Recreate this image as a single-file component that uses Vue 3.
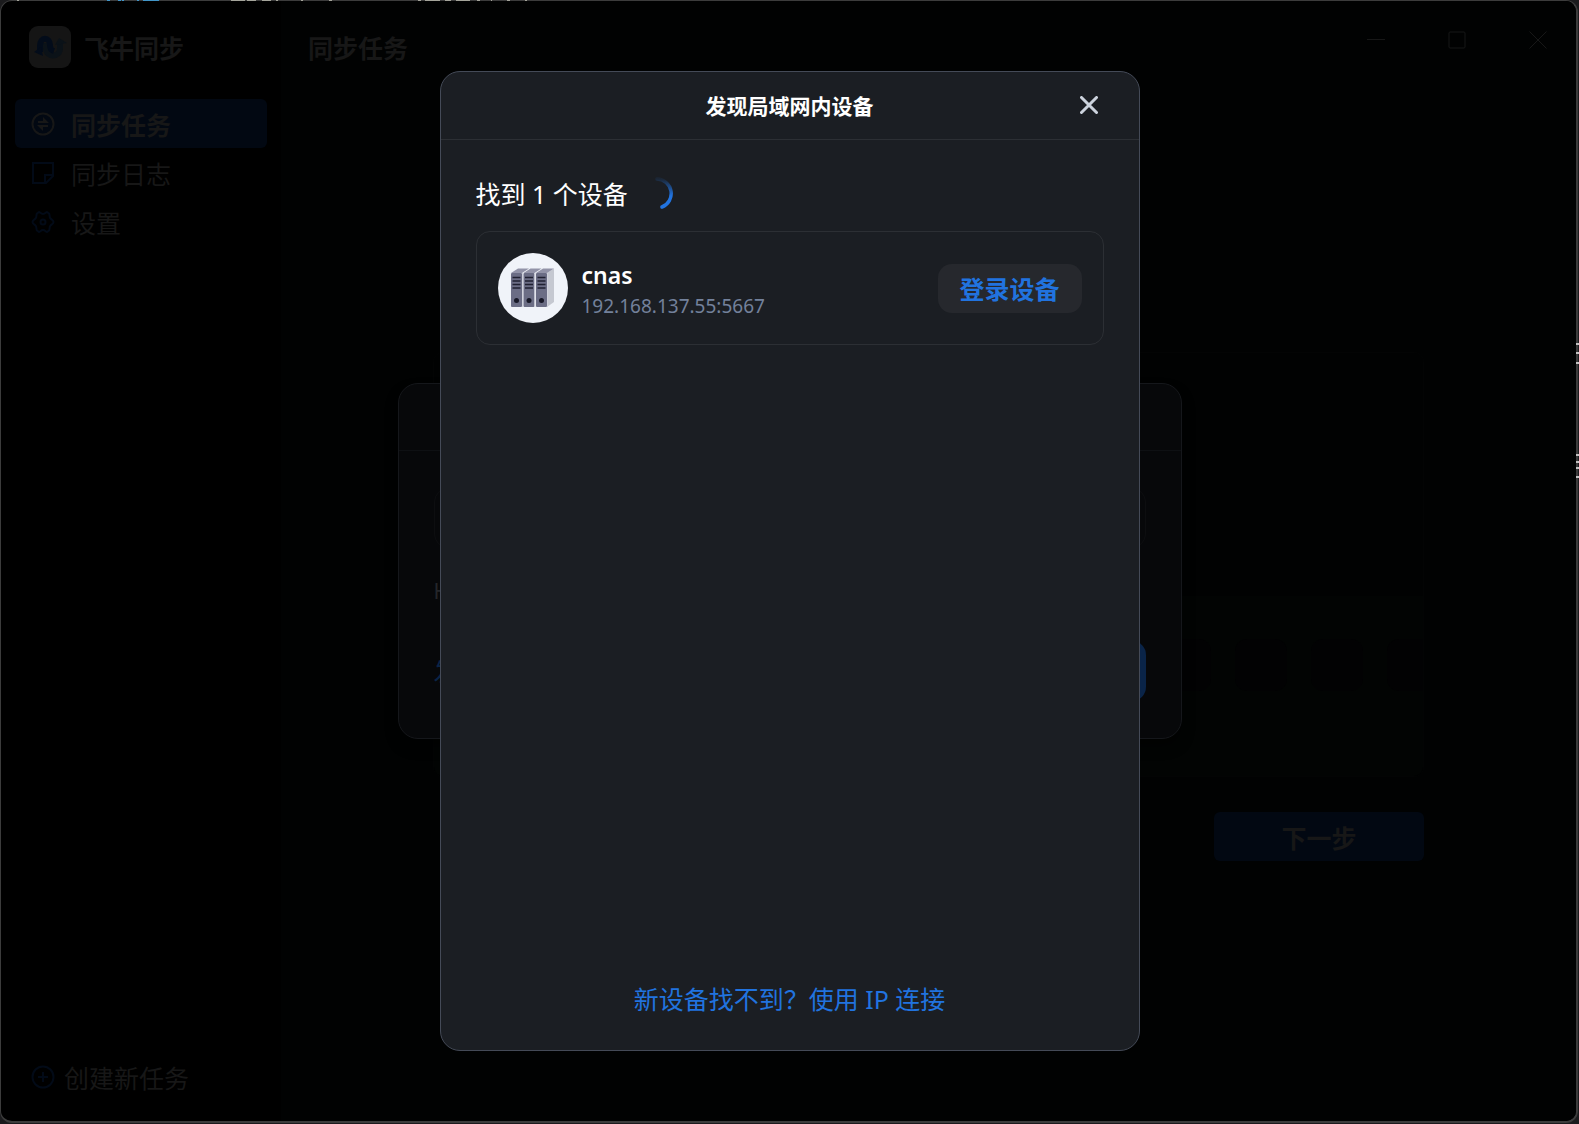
<template>
  <div class="desktop">
    <div class="window">
      <aside class="sidebar">
        <div class="brand">
          <svg class="logo" viewBox="0 0 42 42" aria-hidden="true">
            <rect width="42" height="42" rx="9" fill="#151515" />
            <path d="M17 17V22C17 32 31 32 31 22V17" fill="none" stroke="#0b1218" stroke-width="6" />
            <path d="M26 19L30 12L38 17Z" fill="#0b1218" />
            <path d="M11 26V20C11 10 21 11 21 19C21 23 22 24 25 25" fill="none" stroke="#030c1a" stroke-width="6" />
            <path d="M5 26L12 21L14 30Z" fill="#030c1a" />
          </svg>
          <span class="brand-name">飞牛同步</span>
        </div>

        <nav class="menu">
          <a
            v-for="item in menu"
            :key="item.id"
            href="#"
            class="menu-item"
            :class="{ active: item.id === current }"
            @click.prevent="current = item.id"
          >
            <svg class="menu-icon" viewBox="0 0 24 24" fill="none" stroke="currentColor" stroke-width="2">
              <template v-if="item.id === 'tasks'">
                <circle cx="12" cy="12" r="10.5" />
                <path d="M7 10H16M17 14H8" />
                <path d="M12 5L18 11H12ZM12 19L6 13H12Z" fill="currentColor" stroke="none" />
              </template>
              <template v-else-if="item.id === 'logs'">
                <path d="M2 2H22V15L15 22H2Z" />
                <path d="M14 22V14H22" />
              </template>
              <template v-else>
                <path d="M8 2C9 2 10 4 12 4S15 2 16 2L18 3.500C19 4.500 18 7 19.500 8.500C20.500 9.500 22.500 10 22.500 12S20.500 14.500 19.500 15.500C18 17 19 19.500 18 20.500L16 22C15 22 14 20 12 20S9 22 8 22L6 20.500C5 19.500 6 17 4.500 15.500C3.500 14.500 1.500 14 1.500 12S3.500 9.500 4.500 8.500C6 7 5 4.500 6 3.500Z" stroke-linejoin="round" />
                <circle cx="12" cy="12" r="2.5" />
              </template>
            </svg>
            <span>{{ item.label }}</span>
          </a>
        </nav>

        <button type="button" class="create-button">
          <svg class="menu-icon" viewBox="0 0 24 24" fill="none" stroke="currentColor" stroke-width="2">
            <circle cx="12" cy="12" r="10.5" />
            <path d="M12 7V17M7 12H17" />
          </svg>
          <span>创建新任务</span>
        </button>
      </aside>

      <main class="content">
        <header class="content-header">
          <h1>同步任务</h1>
          <div class="window-controls">
            <button type="button" aria-label="最小化">
              <svg viewBox="0 0 18 18"><path d="M0 8.500H18" /></svg>
            </button>
            <button type="button" aria-label="最大化">
              <svg viewBox="0 0 18 18"><rect x="1" y="1" width="16" height="16" rx="1" /></svg>
            </button>
            <button type="button" aria-label="关闭">
              <svg viewBox="0 0 18 18"><path d="M0.500 0.500L17.500 17.500M17.500 0.500L0.500 17.500" /></svg>
            </button>
          </div>
        </header>
        <div class="wizard">
          <div class="preview">
            <div class="preview-dock">
              <i v-for="n in 13" :key="n"></i>
            </div>
          </div>
          <button type="button" class="next-button">下一步</button>
        </div>
      </main>
    </div>

    <!-- bits of the windows behind that show along the edges -->
    <div class="edge-top" aria-hidden="true">
      <i
        v-for="[x, width, color] in topMarks"
        :key="x"
        :style="{ left: x + 'px', width: width + 'px', background: color }"
      ></i>
    </div>
    <div class="edge-right" aria-hidden="true">
      <i v-for="y in rightMarks" :key="y" :style="{ top: y + 'px' }"></i>
    </div>

    <div class="overlay">
      <section class="login-dialog" aria-hidden="true">
        <div class="login-header">
          <svg class="login-close" viewBox="0 0 18 18"><path d="M1 1L17 17M17 1L1 17" /></svg>
        </div>
        <div class="login-body">
          <div class="login-field"></div>
          <div class="login-protocol">HTTPS</div>
          <div class="login-footer">
            <span>发现</span>
            <div class="login-submit"></div>
          </div>
        </div>
      </section>
    </div>

    <div class="overlay">
      <section class="discover-dialog" role="dialog" aria-labelledby="discover-title">
        <header class="discover-header">
          <h2 id="discover-title">发现局域网内设备</h2>
          <button type="button" class="close-button" aria-label="关闭">
            <svg viewBox="0 0 18 18"><path d="M1.500 1.500L16.500 16.500M16.500 1.500L1.500 16.500" /></svg>
          </button>
        </header>

        <div class="discover-body">
          <div class="found">
            <span>找到 {{ devices.length }} 个设备</span>
            <svg class="spinner" viewBox="0 0 32 32" aria-hidden="true">
              <defs>
                <linearGradient id="spin" x1="0" y1="0" x2="0" y2="1">
                  <stop offset="0" stop-color="#2173df" stop-opacity="0.1" />
                  <stop offset="0.6" stop-color="#2173df" />
                </linearGradient>
              </defs>
              <path d="M15 2A14.500 14.500 0 0 1 20 30" fill="none" stroke="url(#spin)" stroke-width="3.5" stroke-linecap="round" />
            </svg>
          </div>

          <div v-for="device in devices" :key="device.address" class="device">
            <svg class="device-avatar" viewBox="0 0 70 70" aria-hidden="true">
              <circle cx="35" cy="35" r="35" fill="#f0f3f9" />
              <path d="M49 20L56 15.500V49L49 54Z" fill="#c5c8d1" />
              <g v-for="x in [13, 25.5, 38]" :key="x" :transform="`translate(${x} 0)`">
                <path d="M0 20L7 15.500H18L11 20Z" fill="#9293a8" />
                <rect y="20" width="11" height="34" rx="1" fill="#6b6d85" />
                <path d="M1.500 24.500H9.500M1.500 28H9.500M1.500 31.500H9.500M1.500 35H9.500" stroke="#202132" stroke-width="1.5" />
                <circle cx="5.5" cy="47.5" r="2.5" fill="#171827" />
                <path d="M11.500 20V54" stroke="#cfd1dc" />
              </g>
            </svg>
            <div class="device-info">
              <div class="device-name">{{ device.name }}</div>
              <div class="device-address">{{ device.address }}</div>
            </div>
            <button type="button" class="login-button">登录设备</button>
          </div>
        </div>

        <footer class="discover-footer">
          <a href="#" @click.prevent>新设备找不到？使用 IP 连接</a>
        </footer>
      </section>
    </div>
  </div>
</template>

<script setup>
import { ref } from 'vue'

const menu = [
  { id: 'tasks', label: '同步任务' },
  { id: 'logs', label: '同步日志' },
  { id: 'settings', label: '设置' }
]

const current = ref('tasks')

const devices = ref([{ name: 'cnas', address: '192.168.137.55:5667' }])

const blue = '#4296c8'
const grey = '#a5a59b'

// x, width, color
const topMarks = [
  [17, 2, grey],
  [107, 3, blue],
  [118, 3, blue],
  [122, 2, blue],
  [137, 2, blue],
  [143, 16, blue],
  [231, 14, grey],
  [247, 9, grey],
  [262, 9, grey],
  [276, 2, grey],
  [301, 2, grey],
  [329, 3, grey],
  [418, 3, grey],
  [425, 15, grey],
  [445, 6, grey],
  [456, 14, grey],
  [477, 3, grey],
  [491, 1, grey],
  [507, 3, grey],
  [525, 2, grey]
]

const rightMarks = [343, 352, 362, 454, 461, 467, 476]
</script>

<style>
body {
  margin: 0;
  background: #1b1b1d;
}
</style>

<style scoped>
* {
  box-sizing: border-box;
}

.desktop {
  position: relative;
  display: flex;
  min-height: 100vh;
  padding: 0 1px 1px 0;
  overflow: hidden;
  font-family: 'Noto Sans', 'Noto Sans CJK SC', sans-serif;
  font-size: 25px;
  line-height: 35px;
  color: #fff;
}

button {
  padding: 0;
  border: none;
  background: none;
  font: inherit;
  color: inherit;
  cursor: pointer;
}

a {
  color: inherit;
  text-decoration: none;
}

svg {
  display: block;
  flex: none;
}

.window {
  flex: 1;
  display: flex;
  border: 1px solid #3c3c3c;
  border-right-width: 2px;
  border-bottom-width: 2px;
  border-radius: 12px;
  overflow: hidden;
  background: #000;
  color: #171717;
}

.edge-top {
  position: absolute;
  top: 0;
  left: 0;
  right: 0;
  height: 1px;
}

.edge-top i {
  position: absolute;
  height: 1px;
}

.edge-right {
  position: absolute;
  top: 0;
  bottom: 0;
  right: 0;
  width: 3px;
}

.edge-right i {
  position: absolute;
  width: 3px;
  height: 2px;
  background: #c0c0c0;
}

.sidebar {
  width: 280px;
  padding: 25px 14px;
  display: flex;
  flex-direction: column;
}

.brand {
  display: flex;
  align-items: center;
  gap: 13px;
  padding-left: 14px;
  margin-bottom: 31px;
}

.logo {
  width: 42px;
  height: 42px;
}

.brand-name {
  padding-top: 2px;
  font-weight: 700;
}

.menu-item {
  display: flex;
  align-items: center;
  gap: 16px;
  height: 49px;
  padding-left: 16px;
  width: 252px;
  border-radius: 6px;
}

.menu-item span,
.create-button span {
  padding-top: 3px;
}

.menu-item.active {
  background: #020812;
  font-weight: 700;
}

.menu-icon {
  width: 24px;
  height: 24px;
  color: #020a17;
}

.active .menu-icon {
  color: #171717;
}

.create-button {
  display: flex;
  align-items: center;
  gap: 9px;
  margin-top: auto;
  padding-left: 16px;
}

.content {
  flex: 1;
  background: #010202;
}

.content-header {
  display: flex;
  justify-content: space-between;
  align-items: flex-start;
  padding: 30px 29px 0 27px;
}

.content-header h1 {
  margin: 0;
  font-size: 25px;
  font-weight: 700;
}

.window-controls {
  display: flex;
  gap: 63px;
}

.window-controls svg {
  width: 18px;
  height: 18px;
  fill: none;
  stroke: #171717;
  stroke-width: 1;
}

.wizard {
  display: flex;
  flex-direction: column;
  align-items: flex-end;
  gap: 35px;
  padding: 286px 152px 0;
}

.preview {
  display: flex;
  flex-direction: column;
  width: 100%;
  height: 425px;
  border: 1px solid #030404;
  border-radius: 10px;
  overflow: hidden;
}

.preview-dock {
  display: flex;
  justify-content: flex-end;
  gap: 24px;
  margin-top: auto;
  padding-top: 43px;
  padding-right: 0;
  margin-right: -16px;
  height: 180px;
  background: #020403;
}

.preview-dock i {
  flex: none;
  width: 52px;
  height: 52px;
  border-radius: 12px;
  background: #020203;
}

.next-button {
  width: 210px;
  height: 49px;
  padding-top: 3px;
  border-radius: 6px;
  background: #020812;
  font-weight: 700;
}

.overlay {
  position: absolute;
  inset: 0;
  display: flex;
  align-items: center;
  justify-content: center;
  padding-bottom: 2px;
}

.login-dialog {
  width: 784px;
  border: 1px solid #15171b;
  border-radius: 20px;
  background: #07080a;
  box-shadow: 0 8px 12px rgba(0, 0, 0, 0.5);
  color: #24262a;
}

.login-header {
  display: flex;
  justify-content: flex-end;
  padding: 24px 41px;
  border-bottom: 1px solid #0e1013;
}

.login-close {
  width: 18px;
  height: 18px;
  stroke: #34373b;
  stroke-width: 3;
}

.login-body {
  padding: 37px 35px;
}

.login-field {
  height: 60px;
  border: 1px solid #0d0e10;
  border-radius: 14px;
}

.login-protocol {
  margin: 26px 0 32px;
  font-size: 21px;
}

.login-footer {
  display: flex;
  align-items: center;
  justify-content: space-between;
  color: #0a2448;
}

.login-submit {
  width: 180px;
  height: 60px;
  border-radius: 14px;
  background: #0a2448;
}

.discover-dialog {
  display: flex;
  flex-direction: column;
  width: 700px;
  height: calc(100% - 142px);
  border: 1px solid #444a57;
  border-radius: 20px;
  background: #1b1e23;
}

.discover-header {
  position: relative;
  display: flex;
  align-items: center;
  justify-content: center;
  height: 68px;
  border-bottom: 1px solid #2c2f34;
}

.discover-header h2 {
  margin: 0;
  padding-top: 2px;
  font-size: 21px;
  font-weight: 700;
}

.close-button {
  position: absolute;
  right: 41px;
  top: 24px;
}

.close-button svg {
  width: 18px;
  height: 18px;
  fill: none;
  stroke: #ccd3dd;
  stroke-width: 3;
  stroke-linecap: round;
}

.discover-body {
  flex: 1;
  padding: 35px;
}

.found {
  display: flex;
  align-items: center;
  gap: 14px;
  height: 35px;
  margin-bottom: 21px;
}

.found span {
  padding-top: 4px;
}

.spinner {
  width: 32px;
  height: 32px;
}

.device {
  display: flex;
  align-items: center;
  gap: 14px;
  padding: 21px;
  border: 1px solid #2c2f34;
  border-radius: 14px;
}

.device-avatar {
  width: 70px;
  height: 70px;
}

.device-info {
  flex: 1;
  padding-top: 4px;
}

.device-name {
  font-size: 23px;
  font-weight: 600;
  line-height: 32px;
}

.device-address {
  font-size: 19px;
  line-height: 30px;
  color: #73819b;
}

.login-button {
  width: 144px;
  height: 49px;
  padding-top: 2px;
  border-radius: 14px;
  background: #26282d;
  color: #2173df;
  font-weight: 700;
}

.discover-footer {
  padding-bottom: 33px;
  text-align: center;
  color: #2173df;
}
</style>
